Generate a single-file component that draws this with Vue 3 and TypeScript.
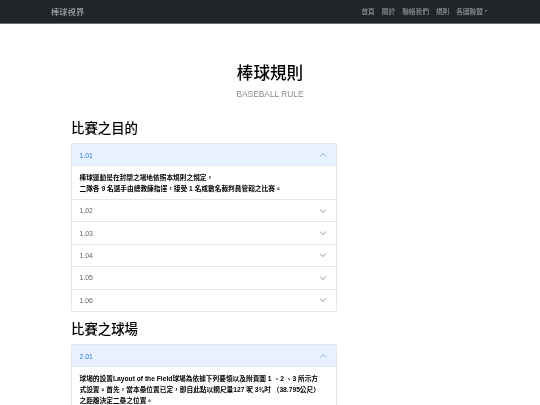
<script setup lang="ts">
const first: string[] = ['1.02', '1.03', '1.04', '1.05', '1.06']
const nav: string[] = ['首頁', '關於', '聯絡我們', '規則']
</script>

<template>
  <div class="page" lang="zh-TW">
    <header class="navbar">
      <a class="brand">棒球視界</a>
      <nav class="links">
        <a v-for="n in nav" :key="n">{{ n }}</a>
        <a class="drop">各國聯盟<i class="caret"></i></a>
      </nav>
    </header>
    <div class="hero">
      <h1>棒球規則</h1>
      <p>BASEBALL RULE</p>
    </div>
    <main class="content">
      <h2>比賽之目的</h2>
      <section class="acc">
        <div class="head open">
          <span>1.01</span>
          <svg viewBox="0 0 16 16" class="chev"><path d="M2 11l6-6 6 6" /></svg>
        </div>
        <div class="body">
          棒球運動是在封閉之場地依照本規則之規定，<br />二隊各 9 名選手由總教練指揮，接受 1 名或數名裁判員管轄之比賽。
        </div>
        <div v-for="r in first" :key="r" class="head">
          <span>{{ r }}</span>
          <svg viewBox="0 0 16 16" class="chev"><path d="M2 5l6 6 6-6" /></svg>
        </div>
      </section>
      <h2 class="second">比賽之球場</h2>
      <section class="acc">
        <div class="head open">
          <span>2.01</span>
          <svg viewBox="0 0 16 16" class="chev"><path d="M2 11l6-6 6 6" /></svg>
        </div>
        <div class="body last">
          球場的設置Layout of the Field球場為依據下列要領以及附頁圖 1 、2 、3 所示方式設置。首先，當本壘位置已定，即自此點以鋼尺量127 呎 3⅜吋 （38.795公尺）之距離決定二壘之位置。
        </div>
      </section>
    </main>
  </div>
</template>

<style>
html, body { margin: 0; background: #fff; overflow: hidden; }
</style>

<style scoped>
.page {
  width: 540px;
  height: 405px;
  overflow: hidden;
  font-family: "Liberation Sans", "Noto Sans CJK TC", sans-serif;
  color: #212529;
  background: #fff;
  filter: blur(.3px);
}
.navbar {
  box-sizing: border-box;
  height: 24px;
  background: #212529;
  border-bottom: 1px solid #6c6f73;
  display: flex;
  align-items: center;
  justify-content: space-between;
  padding: 0 53px 1px 51px;
}
.brand { color: rgba(255, 255, 255, .65); font-size: 8.3px; }
.links { display: flex; gap: 7px; font-size: 6.7px; color: rgba(255, 255, 255, .55); margin-top: -1px; }
.drop { display: flex; align-items: center; }
.caret {
  margin-left: 2px;
  border-top: 2px solid rgba(255, 255, 255, .55);
  border-left: 1.6px solid transparent;
  border-right: 1.6px solid transparent;
}
.hero { text-align: center; padding-top: 38px; }
.hero h1 { margin: 0; font-size: 16.6px; line-height: 24px; font-weight: 500; color: #000; }
.hero p { margin: 2px 0 0; font-size: 8.4px; line-height: 12px; color: #868e96; }
.content { width: 266px; margin-left: 71px; }
h2 { margin: 20px 0 5px; font-size: 13.4px; line-height: 18px; font-weight: 500; color: #000; }
.second { margin-top: 9px; }
.acc {
  border: .5px solid #e3e5e8;
  border-radius: 2px;
  overflow: hidden;
}
.head {
  box-sizing: border-box;
  height: 22.4px;
  display: flex;
  align-items: center;
  justify-content: space-between;
  padding: 0 9px 0 7.5px;
  font-size: 6.9px;
  color: #5f6469;
  border-top: .5px solid #e3e5e8;
}
.head:first-child { border-top: 0; }
.head.open { background: #e7f1ff; color: #2f7be8; box-shadow: inset 0 -.5px 0 #dfe3e8; }
.chev { width: 8px; height: 8px; fill: none; stroke: #333; stroke-width: 1.1; }
.open .chev { stroke: #3b6fb5; }
.body {
  padding: 5.3px 14px 5.3px 7.5px;
  font-size: 6.7px;
  line-height: 11px;
  font-weight: 700;
  color: #000;
}
</style>
